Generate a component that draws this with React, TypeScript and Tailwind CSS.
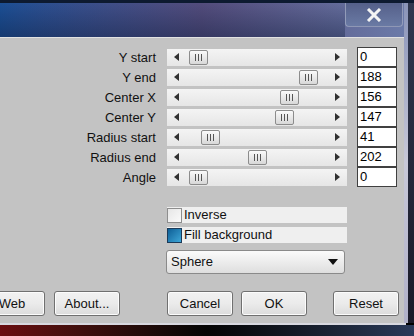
import type { ReactNode } from 'react';

const rader = [
  { label: 'Y start', värde: '0', tumme: 22 },
  { label: 'Y end', värde: '188', tumme: 132 },
  { label: 'Center X', värde: '156', tumme: 113 },
  { label: 'Center Y', värde: '147', tumme: 108 },
  { label: 'Radius start', värde: '41', tumme: 34 },
  { label: 'Radius end', värde: '202', tumme: 81 },
  { label: 'Angle', värde: '0', tumme: 22 },
];

function Pil({ höger = false }: { höger?: boolean }) {
  return (
    <svg width="5" height="8" viewBox="0 0 5 8" className="shrink-0">
      {höger ? <path d="M0 0 L5 4 L0 8 Z" fill="#303030" /> : <path d="M5 0 L0 4 L5 8 Z" fill="#303030" />}
    </svg>
  );
}

function Reglage({ tumme }: { tumme: number }) {
  return (
    <div className="relative flex h-[17px] w-[180px] items-center justify-between bg-gradient-to-b from-[#f4f4f4] to-[#e6e6e6] px-[7px]">
      <Pil />
      <Pil höger />
      <div
        className="absolute top-[1px] flex h-[15px] w-[19px] items-center justify-center gap-[2px] rounded-[2px] border border-[#8c8c8c] bg-gradient-to-b from-[#fafafa] to-[#d8d8d8]"
        style={{ left: tumme }}
      >
        <span className="h-[7px] w-px bg-[#555]" />
        <span className="h-[7px] w-px bg-[#555]" />
        <span className="h-[7px] w-px bg-[#555]" />
      </div>
    </div>
  );
}

function Knapp({ children }: { children: ReactNode }) {
  return (
    <button className="flex h-[25px] w-[66px] shrink-0 items-center justify-center rounded-[3px] border border-[#707070] bg-gradient-to-b from-[#f2f2f2] via-[#ebebeb] to-[#dcdcdc] text-[13px] text-[#111] shadow-[inset_0_0_0_1px_#fcfcfc]">
      {children}
    </button>
  );
}

export default function App() {
  return (
    <div className="flex h-[336px] w-[414px] flex-col overflow-hidden bg-black font-['Liberation_Sans',Arial,sans-serif]">
      <div className="flex h-[323px] shrink-0">
        <div className="flex w-[404px] flex-col">
          <div className="h-[3px] bg-[#0d1a30]" />
          <div className="flex h-[34px] bg-gradient-to-r from-[#1b4f95] via-[#534c7c] to-[#6b7aa8]">
            <div className="flex-1 bg-gradient-to-b from-transparent to-[#0c1a3a]/40" />
            <div className="mr-[1px] flex h-[24px] w-[58px] items-center justify-center rounded-b-[4px] border border-t-0 border-[#a8b0c8]/70 bg-gradient-to-b from-[#55608a] to-[#6a7aa4]">
              <svg width="16" height="14" viewBox="0 0 16 14">
                <path d="M2 1 L14 13 M14 1 L2 13" stroke="#f4f4f4" strokeWidth="3" />
              </svg>
            </div>
          </div>
          <div className="flex flex-1 flex-col border-t border-[#e2e2e2] bg-[#c3c3c3] pt-[9px]">
            <div className="flex flex-col">
              {rader.map(({ label, värde, tumme }) => (
                <div key={label} className="flex h-[20px] items-center">
                  <span className="w-[157px] pr-[1px] text-right text-[13px] leading-none text-[#111]">{label}</span>
                  <div className="ml-[10px]">
                    <Reglage tumme={tumme} />
                  </div>
                  <div className="ml-[10px] flex h-[20px] w-[40px] items-center border border-[#404040] bg-white pl-[2px] text-[13px] text-black">
                    {värde}
                  </div>
                </div>
              ))}
            </div>
            <div className="ml-[167px] mt-[20px] flex w-[180px] flex-col gap-[4px]">
              <div className="flex h-[16px] items-center gap-[2px] bg-[#efefef]">
                <span className="h-[15px] w-[15px] border border-[#8e8e8e] bg-gradient-to-br from-[#e6e6e6] to-[#fafafa]" />
                <span className="text-[13px] text-[#111]">Inverse</span>
              </div>
              <div className="flex h-[16px] items-center gap-[2px] bg-[#efefef]">
                <span className="h-[15px] w-[15px] border border-[#1c3a58] bg-gradient-to-br from-[#0d5f96] to-[#3ea7d8]" />
                <span className="text-[13px] text-[#111]">Fill background</span>
              </div>
            </div>
            <div className="ml-[166px] mt-[7px] flex h-[24px] w-[179px] items-center justify-between rounded-[3px] border border-[#8a8a8a] bg-gradient-to-b from-[#fbfbfb] to-[#dedede] pl-[4px] pr-[6px]">
              <span className="text-[13px] text-[#111]">Sphere</span>
              <svg width="10" height="6" viewBox="0 0 10 6">
                <path d="M0 0 L10 0 L5 6 Z" fill="#111" />
              </svg>
            </div>
            <div className="ml-[-21px] mt-[17px] flex">
              <Knapp>Web</Knapp>
              <div className="ml-[9px]">
                <Knapp>About...</Knapp>
              </div>
              <div className="ml-[47px]">
                <Knapp>Cancel</Knapp>
              </div>
              <div className="ml-[8px]">
                <Knapp>OK</Knapp>
              </div>
              <div className="ml-[26px]">
                <Knapp>Reset</Knapp>
              </div>
            </div>
          </div>
        </div>
        <div className="flex w-[10px] flex-col">
          <div className="h-[3px] bg-[#0d1a30]" />
          <div className="flex flex-1">
            <div className="w-[4px] bg-gradient-to-b from-[#8a94b8] via-[#c8c8d8] to-[#b0b0c8]" />
            <div className="w-[6px] bg-gradient-to-b from-[#303850] to-[#1a1a28]" />
          </div>
        </div>
      </div>
      <div className="h-[2px] w-[406px] bg-[#d8d8e0]" />
      <div className="flex-1 bg-gradient-to-r from-[#6a0c10] via-[#050505] to-[#2a3a5a]" />
    </div>
  );
}
